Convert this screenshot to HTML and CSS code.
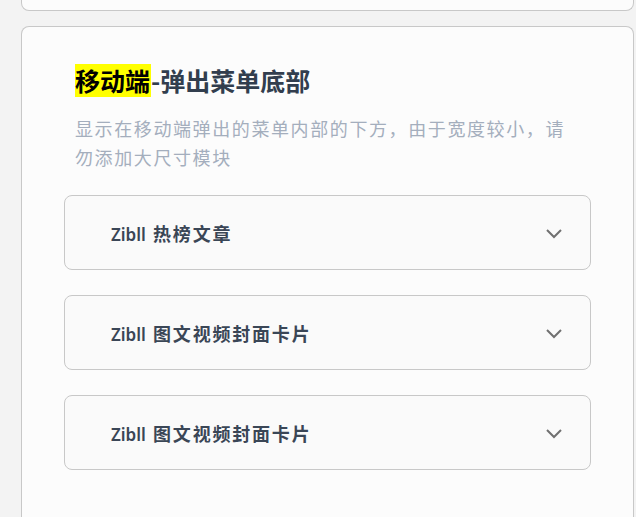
FILE: index.html
```html
<!DOCTYPE html>
<html lang="zh-CN">
<head>
<meta charset="utf-8">
<title>移动端-弹出菜单底部</title>
<link rel="stylesheet" href="styles.css">
</head>
<body>
<div class="page">
  <div class="card card-prev"></div>
  <div class="card card-main">
    <div class="head">
      <h2 class="title"><span class="mark">移动端</span>-弹出菜单底部</h2>
      <p class="desc">显示在移动端弹出的菜单内部的下方，由于宽度较小，请勿添加大尺寸模块</p>
    </div>
    <div class="items">
      <div class="item">
        <span class="item-name"><span class="latin">Zibll</span> <span class="cjk">热榜文章</span></span>
        <svg class="chev" width="18" height="11" viewBox="0 0 18 11"><polyline points="2,2 9,9 16,2" fill="none" stroke="#707070" stroke-width="2"/></svg>
      </div>
      <div class="item">
        <span class="item-name"><span class="latin">Zibll</span> <span class="cjk">图文视频封面卡片</span></span>
        <svg class="chev" width="18" height="11" viewBox="0 0 18 11"><polyline points="2,2 9,9 16,2" fill="none" stroke="#707070" stroke-width="2"/></svg>
      </div>
      <div class="item">
        <span class="item-name"><span class="latin">Zibll</span> <span class="cjk">图文视频封面卡片</span></span>
        <svg class="chev" width="18" height="11" viewBox="0 0 18 11"><polyline points="2,2 9,9 16,2" fill="none" stroke="#707070" stroke-width="2"/></svg>
      </div>
    </div>
  </div>
</div>
</body>
</html>
```
FILE: styles.css
```css
html, body {
  margin: 0;
  padding: 0;
  background: #f3f3f3;
  height: 100%;
  overflow: hidden;
}
body {
  font-family: "Noto Sans", "Noto Sans CJK SC", sans-serif;
}
.page {
  padding: 0 2px 0 21px;
  display: flex;
  flex-direction: column;
  gap: 15px;
}
.card {
  background: #fcfcfc;
  border: 1px solid #c8c8c8;
  border-radius: 8px;
}
.card-prev {
  height: 10px;
  border-top: none;
  border-radius: 0 0 8px 8px;
}
.card-main {
  padding: 37px 42px 60px;
  border-bottom: none;
  border-radius: 8px 8px 0 0;
}
.head {
  padding: 0 16px 0 11px;
}
.title {
  margin: 0;
  font-family: "Noto Sans CJK SC", sans-serif;
  font-size: 25px;
  font-weight: 700;
  line-height: 33px;
  color: #323e4e;
}
.mark {
  display: inline-block;
  background: #ffff00;
  color: #000;
  padding: 0 1px 0 0;
  height: 33px;
  line-height: 33px;
}
.desc {
  margin: 17px 0 0;
  font-family: "Noto Sans CJK SC", sans-serif;
  font-size: 18px;
  letter-spacing: 1.6px;
  line-height: 29px;
  color: #a4aebd;
}
.items {
  margin-top: 23px;
  display: flex;
  flex-direction: column;
  gap: 25px;
}
.item {
  height: 73px;
  border: 1px solid #c8c8c8;
  border-radius: 8px;
  background: #fafafa;
  display: flex;
  align-items: center;
  justify-content: space-between;
  padding: 0 27px 0 46px;
}
.item-name {
  color: #3a4656;
  font-weight: 700;
}
.latin {
  font-family: "Noto Sans", sans-serif;
  font-size: 17px;
  font-weight: 600;
  margin-right: 3px;
}
.cjk {
  font-family: "Noto Sans CJK SC", sans-serif;
  font-size: 18px;
  letter-spacing: 1.8px;
}
.chev {
  display: block;
  margin-top: 1px;
}
```
